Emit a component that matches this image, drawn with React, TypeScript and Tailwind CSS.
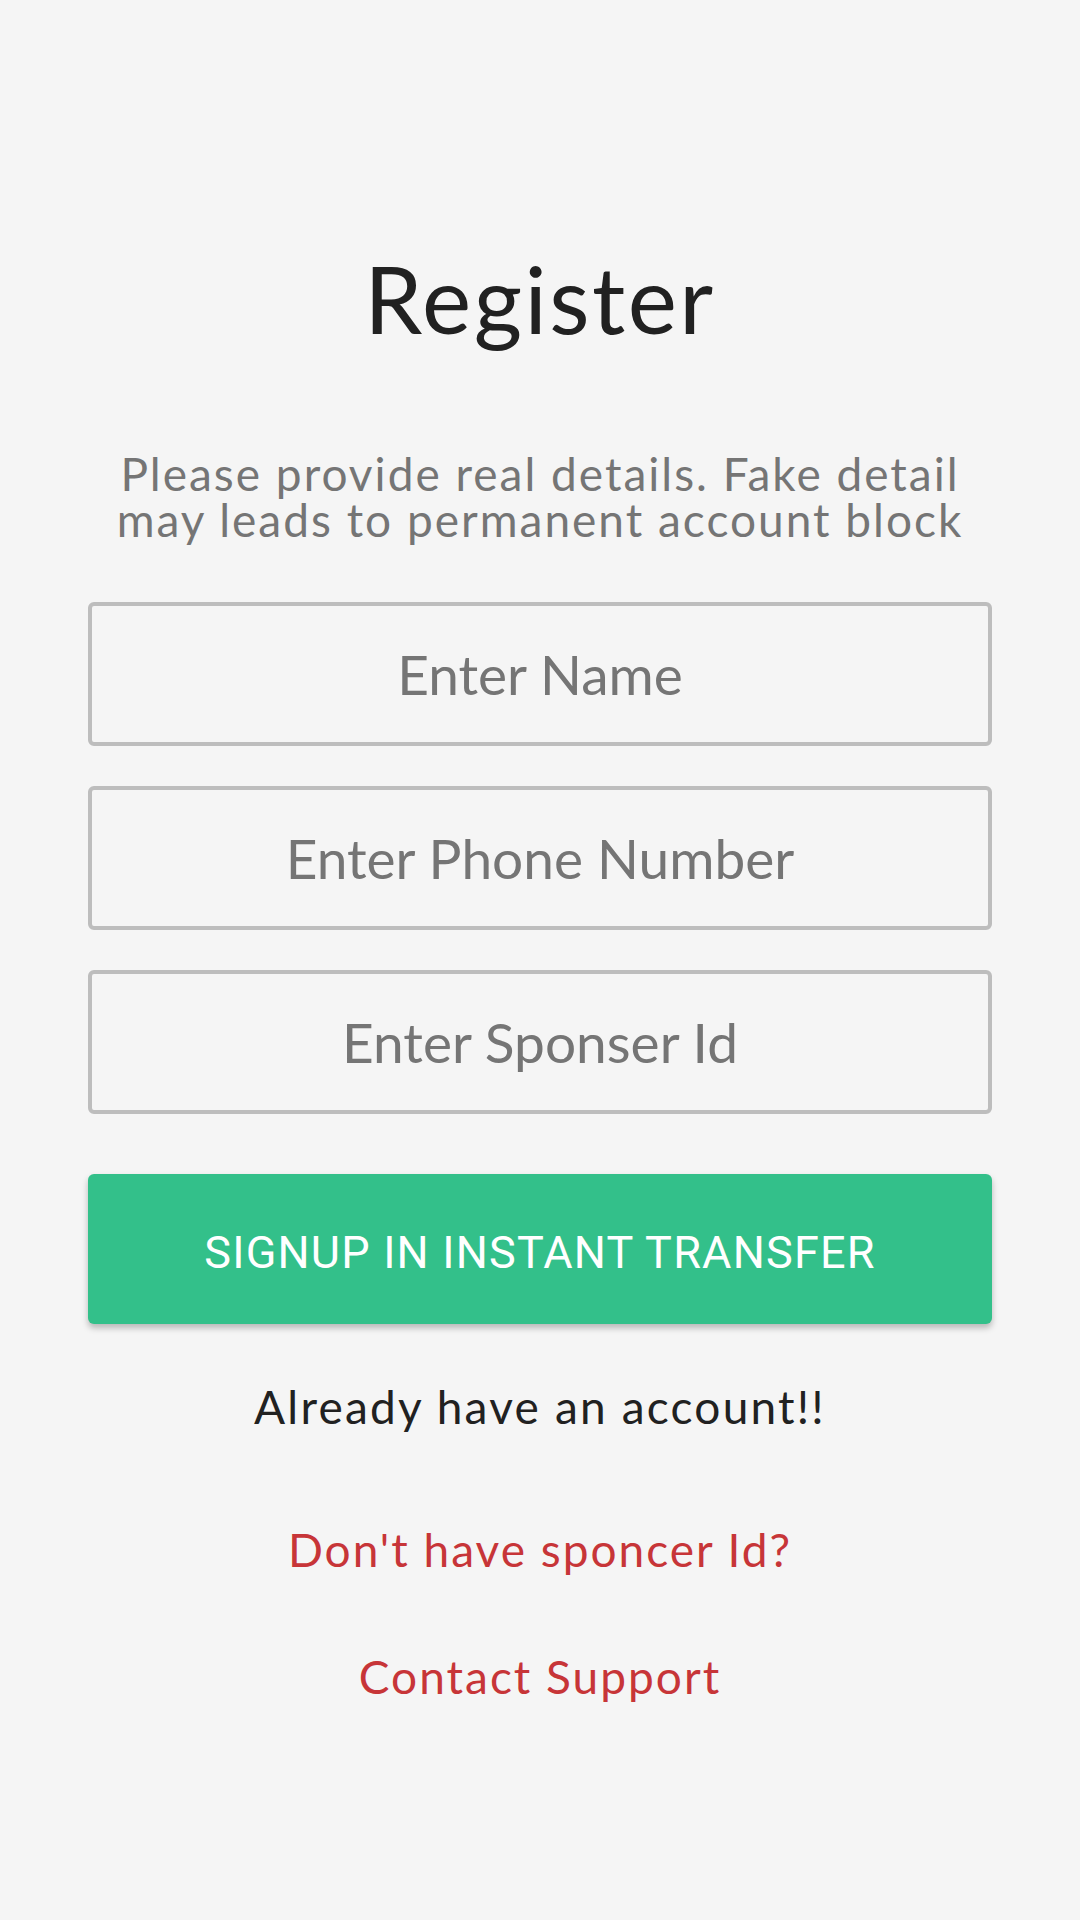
import React from "react";

const font = { fontFamily: '"Lato", "Noto Sans", sans-serif' };

export default function App() {
  const fields = ["Enter Name", "Enter Phone Number", "Enter Sponser Id"];
  return (
    <div
      className="min-h-[1920px] w-full bg-[#f5f5f5] flex flex-col items-center px-[88px] font-['Lato',_'Noto_Sans',_sans-serif]"
      style={font}
    >
      <h1 className="mt-[243px] text-[93px] leading-[110px] tracking-[2.5px] font-normal text-[#212121]">
        Register
      </h1>
      <p className="mt-[98px] text-[46px] leading-[46px] tracking-[2px] text-[#757575] text-center">
        Please provide real details. Fake detail
        <br />
        may leads to permanent account block
      </p>
      <div className="mt-[59px] w-full flex flex-col gap-[40px]">
        {fields.map((f) => (
          <input
            key={f}
            type="text"
            placeholder={f}
            className="h-[144px] w-full rounded-[6px] border-4 border-[#bdbdbd] bg-transparent text-center text-[55px] text-[#212121] placeholder:text-[#757575] outline-none"
            style={font}
          />
        ))}
      </div>
      <button
        className="mt-[60px] h-[150px] w-full rounded-[6px] bg-[#33c08a] pt-[8px] text-white text-[45px] tracking-[1.2px] uppercase shadow-[0_4px_6px_rgba(0,0,0,0.25)] font-['Roboto',_sans-serif]"
        style={{ fontFamily: '"Roboto", sans-serif' }}
      >
        Signup in Instant Transfer
      </button>
      <p className="mt-[55px] text-[46px] leading-[55px] tracking-[2.2px] text-[#212121]">
        Already have an account!!
      </p>
      <p className="mt-[88px] text-[46px] leading-[55px] tracking-[2px] text-[#c73538]">
        Don't have sponcer Id?
      </p>
      <p className="mt-[72px] text-[46px] leading-[55px] tracking-[2px] text-[#c73538]">
        Contact Support
      </p>
    </div>
  );
}
